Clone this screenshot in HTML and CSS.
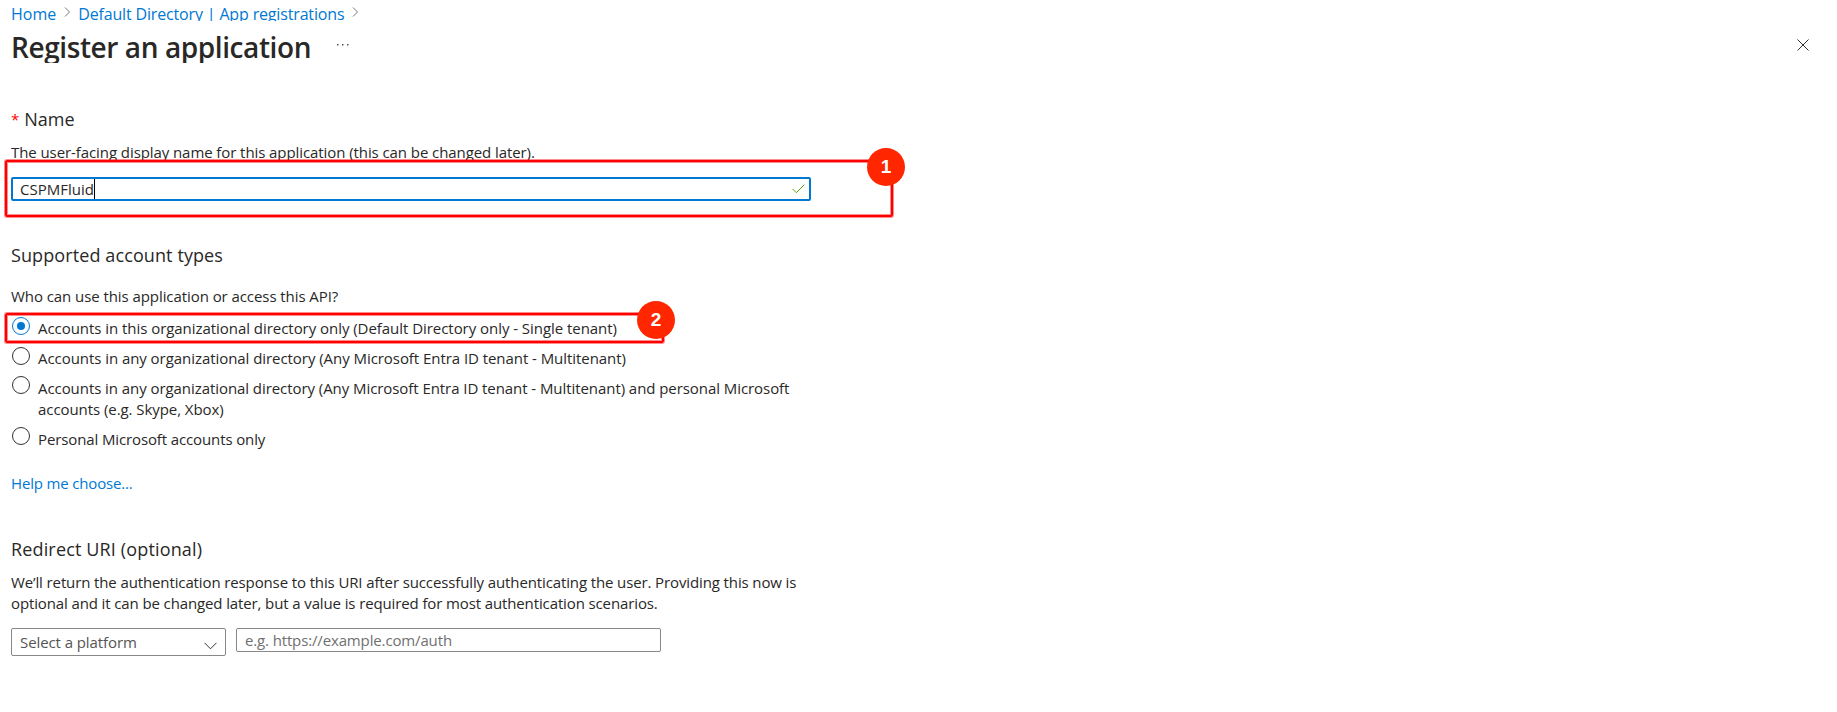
FILE: index.html
```html
<!DOCTYPE html>
<html lang="en">
<head>
<meta charset="utf-8">
<title>Register an application</title>
<link rel="stylesheet" href="styles.css">
</head>
<body>
<main class="page">
  <nav class="breadcrumb">
    <a class="crumb-home">Home</a>
    <svg class="sep" width="7" height="10" viewBox="0 0 7 10"><path d="M1 .5 5.5 5 1 9.5"/></svg>
    <a class="crumb-dir">Default Directory | App registrations</a>
    <svg class="sep" width="7" height="10" viewBox="0 0 7 10"><path d="M1 .5 5.5 5 1 9.5"/></svg>
  </nav>
  <header class="header">
    <h1 class="title">Register an application</h1>
    <svg class="dots" width="12" height="3" viewBox="0 0 12 3"><path d="M0 1h1.5v1.5H0zM5 1h1.5v1.5H5zM10 1h1.5v1.5H10z"/></svg>
    <svg class="close" width="12" height="12" viewBox="0 0 12 12"><path d="M.5.5l11 11M11.5.5l-11 11"/></svg>
  </header>

  <section class="name-section">
    <h2 class="heading name-heading"><span class="star">*</span><span>Name</span></h2>
    <p class="text hint">The user-facing display name for this application (this can be changed later).</p>
    <div class="name-field">
      <span class="value">CSPMFluid</span><span class="caret"></span>
      <svg class="check" width="13" height="10" viewBox="0 0 13 10"><path d="M.7 5l3.6 3.7L12.3.7"/></svg>
    </div>
    <div class="mark mark-one"></div>
    <span class="badge badge-one">1</span>
  </section>

  <section class="types">
    <h2 class="heading types-heading">Supported account types</h2>
    <p class="text who">Who can use this application or access this API?</p>
    <div class="options">
      <div class="option first"><i class="radio on"></i><span class="text">Accounts in this organizational directory only (Default Directory only - Single tenant)</span></div>
      <div class="option second"><i class="radio"></i><span class="text">Accounts in any organizational directory (Any Microsoft Entra ID tenant - Multitenant)</span></div>
      <div class="option third"><i class="radio"></i><span class="text">Accounts in any organizational directory (Any Microsoft Entra ID tenant - Multitenant) and personal Microsoft<br>accounts (e.g. Skype, Xbox)</span></div>
      <div class="option fourth"><i class="radio"></i><span class="text">Personal Microsoft accounts only</span></div>
      <div class="mark mark-two"></div>
      <span class="badge badge-two">2</span>
    </div>
    <a class="text help">Help me choose...</a>
  </section>

  <section class="redirect">
    <h2 class="heading redirect-heading">Redirect URI (optional)</h2>
    <p class="text para">We’ll return the authentication response to this URI after successfully authenticating the user. Providing this now is<br>optional and it can be changed later, but a value is required for most authentication scenarios.</p>
    <div class="fields">
      <div class="select"><span class="sel-text">Select a platform</span><svg width="13" height="8" viewBox="0 0 13 8"><path d="M.5.8l6 6 6-6"/></svg></div>
      <div class="uri"><span class="uri-text">e.g. https://example.com/auth</span></div>
    </div>
  </section>
</main>
</body>
</html>
```

FILE: styles.css
```css
* { box-sizing: border-box; }
body { margin: 0; background: #fff; color: #292827; font-family: "Open Sans", "Noto Sans", sans-serif; font-size: 15px; }
h1, h2, p { margin: 0; font-weight: 400; }
svg { fill: none; flex: none; }
.page { width: 1837px; height: 712px; padding-left: 11px; display: flex; flex-direction: column; overflow: hidden; white-space: nowrap; }
.text { font-size: 15px; line-height: 21px; }

.breadcrumb { display: flex; height: 21px; overflow: hidden; line-height: 29px; font-size: 16px; color: #0078d4; }
.crumb-dir { letter-spacing: -.16px; }
.sep { stroke: #777; stroke-width: 1; margin: 7px 7px 0 8px; }
.header { display: flex; height: 42px; overflow: hidden; }
.title { font-size: 28px; font-weight: 600; line-height: 53px; letter-spacing: -.41px; width: 326px; flex: none; }
.dots { fill: #555; margin-top: 22px; }
.close { stroke: #333; margin: 18px 28px 0 auto; }

.name-section { position: relative; height: 177px; padding-top: 43px; }
.heading { font-size: 18px; line-height: 26px; }
.types-heading { letter-spacing: .1px; }
.redirect-heading { letter-spacing: .15px; }
.name-heading { display: flex; gap: 5px; }
.star { color: #f00; font-size: 15px; }
.hint { margin-top: 10px; height: 18px; overflow: hidden; letter-spacing: -.08px; }
.name-field { display: flex; align-items: center; margin-top: 17px; width: 800px; height: 24px; border: 2px solid #0078d4; border-radius: 2px; padding: 0 4px 0 7px; }
.caret { width: 1px; height: 20px; background: #000; }
.check { stroke: #57a300; margin-left: auto; }
.mark { position: absolute; border: 2px solid #f00; border-radius: 2px; box-shadow: 0 0 0 1px rgba(255, 0, 0, .45), inset 0 0 0 1px rgba(255, 0, 0, .45); pointer-events: none; }
.mark-one { left: -6px; top: 97px; width: 888px; height: 57px; }
.badge { position: absolute; width: 38px; height: 38px; border-radius: 50%; background: #ff2600; color: #fff; font: 700 19px/37px "Liberation Sans", sans-serif; text-align: center; }
.badge-one { left: 856px; top: 85px; }

.types { height: 296px; padding-top: 2px; }
.who { margin-top: 18px; letter-spacing: -.07px; }
.options { position: relative; margin-top: 10px; letter-spacing: -.055px; }
.option { display: flex; gap: 8px; padding-left: 1px; height: 30px; }
.option.second { height: 29px; }
.option.third { height: 51px; }
.option .text { margin-top: 1px; }
.first .text { letter-spacing: -.045px; }
.third .text, .fourth .text { margin-top: 2px; }
.third .text { letter-spacing: -.065px; }
.fourth .text { letter-spacing: -.12px; }
.radio { width: 18px; height: 18px; border: 1px solid #333; border-radius: 50%; flex: none; display: grid; place-items: center; }
.radio.on { border-color: #0078d4; }
.radio.on::after { content: ""; width: 8px; height: 8px; border-radius: 50%; background: #0078d4; }
.mark-two { left: -6px; top: -4px; width: 659px; height: 30px; }
.badge-two { left: 626px; top: -16px; }
.help { display: block; margin-top: 16px; color: #0078d4; letter-spacing: -.16px; }

.fields { display: flex; gap: 10px; margin-top: 14px; }
.para { margin-top: 10px; letter-spacing: -.12px; }
.select, .uri { display: flex; align-items: center; border: 1px solid #8a8886; border-radius: 2px; color: #555; }
.select { width: 215px; height: 28px; padding: 0 8px; justify-content: space-between; letter-spacing: -.09px; }
.select svg { stroke: #333; margin-top: 7px; }
.uri { width: 425px; height: 24px; padding: 0 8px; color: #707070; letter-spacing: -.14px; }
```
